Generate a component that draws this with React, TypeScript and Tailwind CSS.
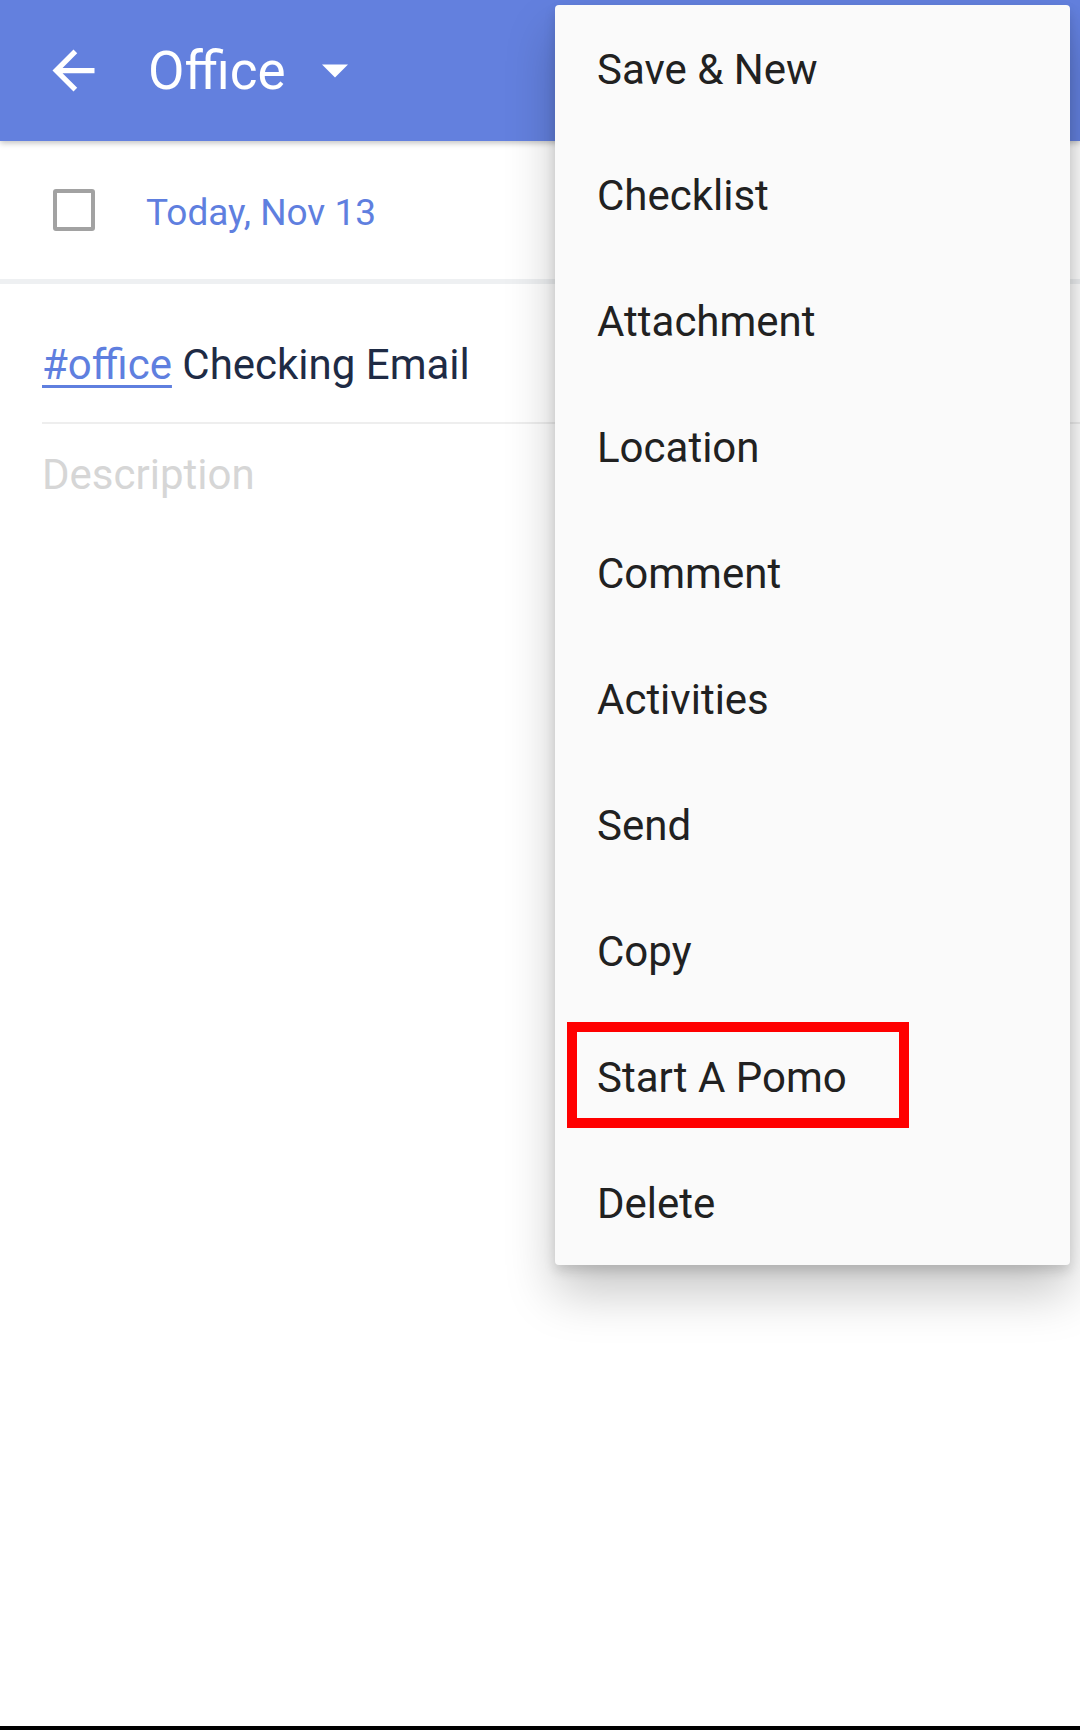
const menuItems = [
  "Save & New",
  "Checklist",
  "Attachment",
  "Location",
  "Comment",
  "Activities",
  "Send",
  "Copy",
  "Start A Pomo",
  "Delete",
];

const font = { fontFamily: "Roboto, 'Noto Sans', sans-serif" };

export default function App() {
  return (
    <div className="relative w-[1080px] h-[1730px] bg-white overflow-hidden flex flex-col" style={font}>
      {/* header */}
      <div className="relative z-10 h-[141px] shrink-0 bg-[#6380de] flex items-center shadow-[0_2px_6px_rgba(0,0,0,0.25)]">
        <svg className="ml-[42px] w-[63px] h-[63px]" viewBox="0 0 24 24" fill="white">
          <path d="M20 11H7.83l5.59-5.59L12 4l-8 8 8 8 1.41-1.41L7.83 13H20v-2z" />
        </svg>
        <span className="ml-[43px] text-[53px] leading-[64px] text-white">Office</span>
        <svg className="ml-[36px] w-[26px] h-[14px]" viewBox="0 0 24 12" fill="white">
          <polygon points="0,0 24,0 12,12" />
        </svg>
      </div>

      {/* date row */}
      <div className="h-[138px] shrink-0 flex items-start pt-[48px]">
        <div className="ml-[53px] w-[42px] h-[42px] border-[4px] border-[#a2a2a2] rounded-[3px]"></div>
        <span className="ml-[51px] text-[37px] leading-[48px] text-[#5f7fdf]">Today, Nov 13</span>
      </div>
      <div className="h-[5px] shrink-0 bg-[#eef0f2]"></div>

      {/* title */}
      <div className="ml-[42px] pt-[51px] pb-[27px] border-b-2 border-[#eeeeee]">
        <div className="text-[42px] leading-[60px] text-[#1e2b45] whitespace-nowrap">
          <span className="text-[#5f7fdf] underline decoration-[3px] underline-offset-[6px]">#office</span> Checking Email
        </div>
      </div>
      <div className="ml-[42px] pt-[25px] text-[42px] leading-[52px] text-[#d6d6d6]">Description</div>

      <div className="flex-1"></div>
      <div className="h-[4px] shrink-0 bg-black"></div>

      {/* overflow menu */}
      <div className="absolute z-20 left-[555px] top-[5px] w-[515px] bg-[#fafafa] rounded-[4px] shadow-[0_28px_50px_rgba(0,0,0,0.22),0_6px_12px_rgba(0,0,0,0.14)] flex flex-col">
        {menuItems.map((label) => (
          <div key={label} className="h-[126px] flex items-center pl-[42px] pt-[2px] text-[42px] text-[#212121]">
            {label}
          </div>
        ))}
      </div>

      {/* highlight annotation */}
      <div className="absolute z-30 left-[567px] top-[1022px] w-[342px] h-[106px] border-[10px] border-[#ff0000]"></div>
    </div>
  );
}
